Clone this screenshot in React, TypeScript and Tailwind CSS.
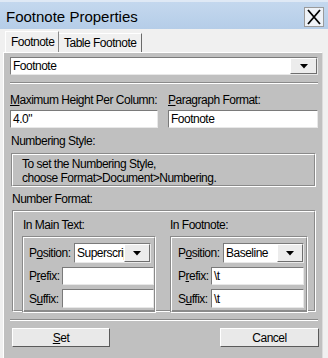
import React from "react";

const F = { fontFamily: "'Liberation Sans',Arial,sans-serif" };
const T = "text-[12px] tracking-[-0.5px] whitespace-nowrap";

function Etched({ className = "", children }: { className?: string; children?: React.ReactNode }) {
  return (
    <div className={"border-t border-l border-t-[#8a8a8a] border-l-[#8a8a8a] border-b border-r border-b-white border-r-white " + className}>
      <div className="border-t border-l border-t-white border-l-white border-b border-r border-b-[#8a8a8a] border-r-[#8a8a8a] h-full">
        {children}
      </div>
    </div>
  );
}

function Field({ className = "", value = "" }: { className?: string; value?: string }) {
  return (
    <div className={"bg-white border border-t-[#7a7a7a] border-l-[#7a7a7a] border-b-[#e8e8e8] border-r-[#e8e8e8] flex items-center pl-[2px] leading-none text-black " + T + " " + className}>
      <span>{value}</span>
    </div>
  );
}

function Arrow() {
  return (
    <div className="h-full flex items-center justify-center bg-[#ececec] border border-t-white border-l-white border-b-[#6e6e6e] border-r-[#6e6e6e]">
      <svg width="8" height="5" viewBox="0 0 8 5"><path d="M0 0H8L4 4.5Z" fill="#000" /></svg>
    </div>
  );
}

function Select({ className = "", value, btn }: { className?: string; value: string; btn: string }) {
  return (
    <div className={"bg-white border border-t-[#7a7a7a] border-l-[#7a7a7a] border-b-[#e8e8e8] border-r-[#e8e8e8] flex " + className}>
      <div className={"flex-1 flex items-center pl-[2px] leading-none overflow-hidden " + T}>{value}</div>
      <div className={btn}><Arrow /></div>
    </div>
  );
}

function Row({ label, u, rest, children, lw }: { label: string; u: string; rest: string; children: React.ReactNode; lw: string }) {
  return (
    <div className="flex items-center">
      <div className={"leading-none " + T + " " + lw}>
        {label}<span className="underline">{u}</span>{rest}
      </div>
      {children}
    </div>
  );
}

export default function App() {
  return (
    <div className="w-[328px] h-[358px] bg-[#f0f0f0] overflow-hidden text-black" style={F}>
      {/* title */}
      <div className="h-[29px] bg-gradient-to-b from-[#c4d8ee] to-[#b5cde8] border-t-2 border-t-[#dfe9f5] flex justify-between">
        <div className="pl-[6px] pt-[6px] text-[15px] leading-[18px]">Footnote Properties</div>
        <div className="mt-[5px] mr-[4px] w-[20px] h-[20px] bg-[#eef2f7] border border-[#9a9a9a] flex items-center justify-center">
          <svg width="16" height="16" viewBox="0 0 16 16"><path d="M2 1L14 15M14 1L2 15" stroke="#000" strokeWidth="1.8" /></svg>
        </div>
      </div>
      {/* tabs */}
      <div className="h-[23px] flex items-end pl-[5px]">
        <div className={"h-[21px] w-[54px] border-t border-l border-white border-r border-r-[#8a8a8a] bg-[#f0f0f0] leading-none pt-[4px] pl-[5px] " + T}>Footnote</div>
        <div className={"h-[19px] w-[83px] border-t border-white border-r border-r-[#6a6a6a] leading-none pt-[3px] pl-[5px] " + T}>Table Footnote</div>
      </div>
      {/* panel */}
      <div className="ml-[3px] w-[320px] h-[306px] bg-[#c0c0c0] border-l border-l-white border-t border-t-white border-r border-r-[#dcdcdc] pl-[6px] pr-[4px] flex flex-col">
        <Select className="mt-[4px] w-[308px] h-[18px]" value="Footnote" btn="w-[27px]" />
        <div className="mt-[7px] w-[308px] h-[2px] border-t border-t-[#8a8a8a] border-b border-b-white" />
        <div className="mt-[9px] flex gap-[10px]">
          <div className="w-[148px] flex flex-col">
            <div className={"leading-[15px] " + T}><span className="underline">M</span>aximum Height Per Column:</div>
            <Field className="mt-[2px] h-[18px]" value={'4.0"'} />
          </div>
          <div className="w-[150px] flex flex-col">
            <div className={"leading-[15px] " + T}><span className="underline">P</span>aragraph Format:</div>
            <Field className="mt-[2px] h-[18px]" value="Footnote" />
          </div>
        </div>
        <div className={"mt-[6px] leading-[15px] pl-[1px] " + T}>Numbering Style:</div>
        <Etched className="mt-[4px] ml-[1px] w-[305px] h-[34px]">
          <div className={"pl-[9px] pt-[2px] leading-[14px] " + T}>
            <div>To set the Numbering Style,</div>
            <div>choose Format&gt;Document&gt;Numbering.</div>
          </div>
        </Etched>
        <div className={"mt-[5px] leading-[15px] pl-[2px] " + T}>Number Format:</div>
        <Etched className="mt-[3px] ml-[2px] w-[304px] h-[102px]">
          <div className="flex pl-[8px] pt-[6px] gap-[14px]">
            <div className="flex flex-col w-[134px]">
              <div className={"leading-[15px] pl-[1px] " + T}>In Main Text:</div>
              <Etched className="mt-[3px] w-[134px] h-[77px]">
                <div className="flex flex-col pl-[5px] pt-[5px] gap-[4px]">
                  <Row label="P" u="o" rest="sition:" lw="w-[45px]">
                    <Select className="w-[77px] h-[20px]" value="Superscript" btn="w-[26px]" />
                  </Row>
                  <Row label="P" u="r" rest="efix:" lw="w-[33px]">
                    <Field className="w-[93px] h-[18px]" />
                  </Row>
                  <Row label="S" u="u" rest="ffix:" lw="w-[33px]">
                    <Field className="w-[93px] h-[19px]" />
                  </Row>
                </div>
              </Etched>
            </div>
            <div className="flex flex-col w-[138px]">
              <div className={"leading-[15px] " + T}>In Footnote:</div>
              <Etched className="mt-[3px] w-[138px] h-[77px]">
                <div className="flex flex-col pl-[6px] pt-[5px] gap-[4px]">
                  <Row label="P" u="o" rest="sition:" lw="w-[45px]">
                    <Select className="w-[81px] h-[20px]" value="Baseline" btn="w-[26px]" />
                  </Row>
                  <Row label="P" u="r" rest="efix:" lw="w-[33px]">
                    <Field className="w-[93px] h-[18px]" value="\t" />
                  </Row>
                  <Row label="S" u="u" rest="ffix:" lw="w-[33px]">
                    <Field className="w-[93px] h-[19px]" value="\t" />
                  </Row>
                </div>
              </Etched>
            </div>
          </div>
        </Etched>
        <div className="mt-[7px] w-[308px] h-[2px] border-t border-t-[#8a8a8a] border-b border-b-white" />
        <div className="mt-[7px] flex justify-between w-[309px] pl-[2px]">
          <div className={"w-[98px] h-[19px] bg-[#e9e9e9] border border-t-white border-l-white border-b-[#5a5a5a] border-r-[#5a5a5a] flex items-center justify-center leading-none " + T}>
            <span className="underline">S</span>et
          </div>
          <div className={"w-[99px] h-[19px] bg-[#e9e9e9] border border-t-white border-l-white border-b-[#5a5a5a] border-r-[#5a5a5a] flex items-center justify-center leading-none " + T}>
            Cancel
          </div>
        </div>
      </div>
    </div>
  );
}
